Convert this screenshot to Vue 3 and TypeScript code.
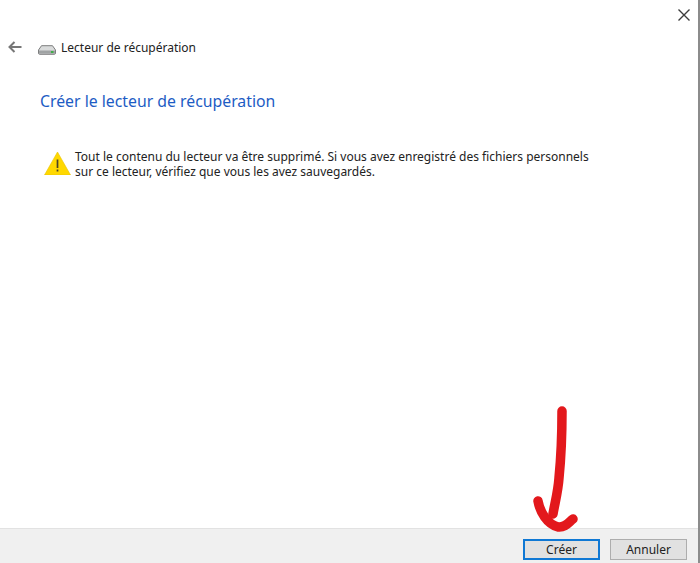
<script setup lang="ts">
const title = 'Lecteur de récupération'
</script>

<template>
  <div class="window">
    <button class="close" aria-label="Fermer">
      <svg width="14" height="14" viewBox="0 0 14 14"><path d="M1.5 1.5 12.5 12.5M12.5 1.5 1.5 12.5" stroke="#3c3c3c" stroke-width="1.4" fill="none" /></svg>
    </button>
    <main class="content">
      <header class="nav">
        <svg class="back" width="14" height="12" viewBox="0 0 14 12"><path d="M13.500 6H1.500M6.500 1 1.500 6l5 5" stroke="#777" stroke-width="2" fill="none" /></svg>
        <svg class="drive" width="18" height="10" viewBox="0 0 18 10">
          <path d="M3.500.7h11L17.500 5v3.200c0 .7-.5 1.100-1.100 1.100H1.600C1 9.300.5 8.900.5 8.200V5z" fill="#d9dbdb" stroke="#6f7172" stroke-width=".9" />
          <path d="M1 5.500h16v3.200H1z" fill="#a0a3a4" />
          <rect x="13" y="6" width="2.500" height="2" fill="#3fae49" />
        </svg>
        <span class="nav-title">{{ title }}</span>
      </header>
      <h1 class="heading">Créer le lecteur de récupération</h1>
      <section class="warning">
        <svg class="warn-icon" width="27" height="24" viewBox="0 0 27 24">
          <path d="M13.500 1 26.500 24H.5z" fill="#ffd800" stroke="#e8c200" stroke-width=".6" stroke-linejoin="round" />
          <path d="M13.500 8.500v8.500" stroke="#4a4226" stroke-width="1.700" />
          <path d="M13.500 18.500v2" stroke="#4a4226" stroke-width="1.700" />
        </svg>
        <p class="warn-text">Tout le contenu du lecteur va être supprimé. Si vous avez enregistré des fichiers personnels<br />sur ce lecteur, vérifiez que vous les avez sauvegardés.</p>
      </section>
    </main>
    <footer class="footer">
      <button class="btn primary">Créer</button>
      <button class="btn">Annuler</button>
    </footer>
    <svg class="arrow" width="60" height="130" viewBox="0 0 60 130">
      <path d="M33 9C33 32 32 56 30 76C29 90 26 100 24 112" stroke="#e3181c" stroke-width="9.500" fill="none" stroke-linecap="round" />
      <path d="M9 99C11 110 18 122 29 125C36 126 40 120 44 117" stroke="#e3181c" stroke-width="9.500" fill="none" stroke-linecap="round" stroke-linejoin="round" />
    </svg>
  </div>
</template>

<style>
html, body { margin: 0; background: #fff; }
</style>

<style scoped>
.window {
  position: relative;
  width: 700px;
  height: 563px;
  box-sizing: border-box;
  display: flex;
  flex-direction: column;
  background: #fff;
  border-right: 2px solid #8c8c8c;
  overflow: hidden;
  font-family: "Noto Sans", "Open Sans", sans-serif;
  color: #222;
}
.close {
  position: absolute;
  top: 8px;
  right: 7px;
  width: 14px;
  height: 14px;
  padding: 0;
  border: 0;
  background: none;
  display: flex;
}
.content {
  flex: 1;
  display: flex;
  flex-direction: column;
  padding: 41px 0 0 8px;
}
.nav {
  display: flex;
  align-items: center;
  height: 14px;
}
.back { margin: -2px 16px 0 0; }
.drive { margin: 3px 5px 0 0; }
.nav-title { font-size: 12px; line-height: 14px; color: #222; }
.heading {
  margin: 36px 0 0 32px;
  font-size: 15.800px;
  line-height: 20px;
  font-weight: 400;
  color: #1d5cc4;
}
.warning {
  display: flex;
  margin: 38px 0 0 36px;
}
.warn-icon { margin-top: 2px; flex: none; }
.warn-text {
  margin: 0 0 0 4px;
  font-size: 12px;
  line-height: 15px;
  color: #222;
  white-space: nowrap;
}
.footer {
  height: 35px;
  box-sizing: border-box;
  display: flex;
  justify-content: flex-end;
  gap: 10px;
  padding: 10px 11px 0 0;
  background: #f0f0f0;
  border-top: 1px solid #e2e2e2;
}
.btn {
  width: 77px;
  height: 21px;
  padding: 0;
  box-sizing: border-box;
  background: #e1e1e1;
  border: 1px solid #adadad;
  font: inherit;
  font-size: 12px;
  line-height: 17px;
  color: #222;
}
.primary {
  border: 2px solid #0f78d4;
  line-height: 15px;
}
.arrow {
  position: absolute;
  left: 529px;
  top: 402px;
}
</style>
